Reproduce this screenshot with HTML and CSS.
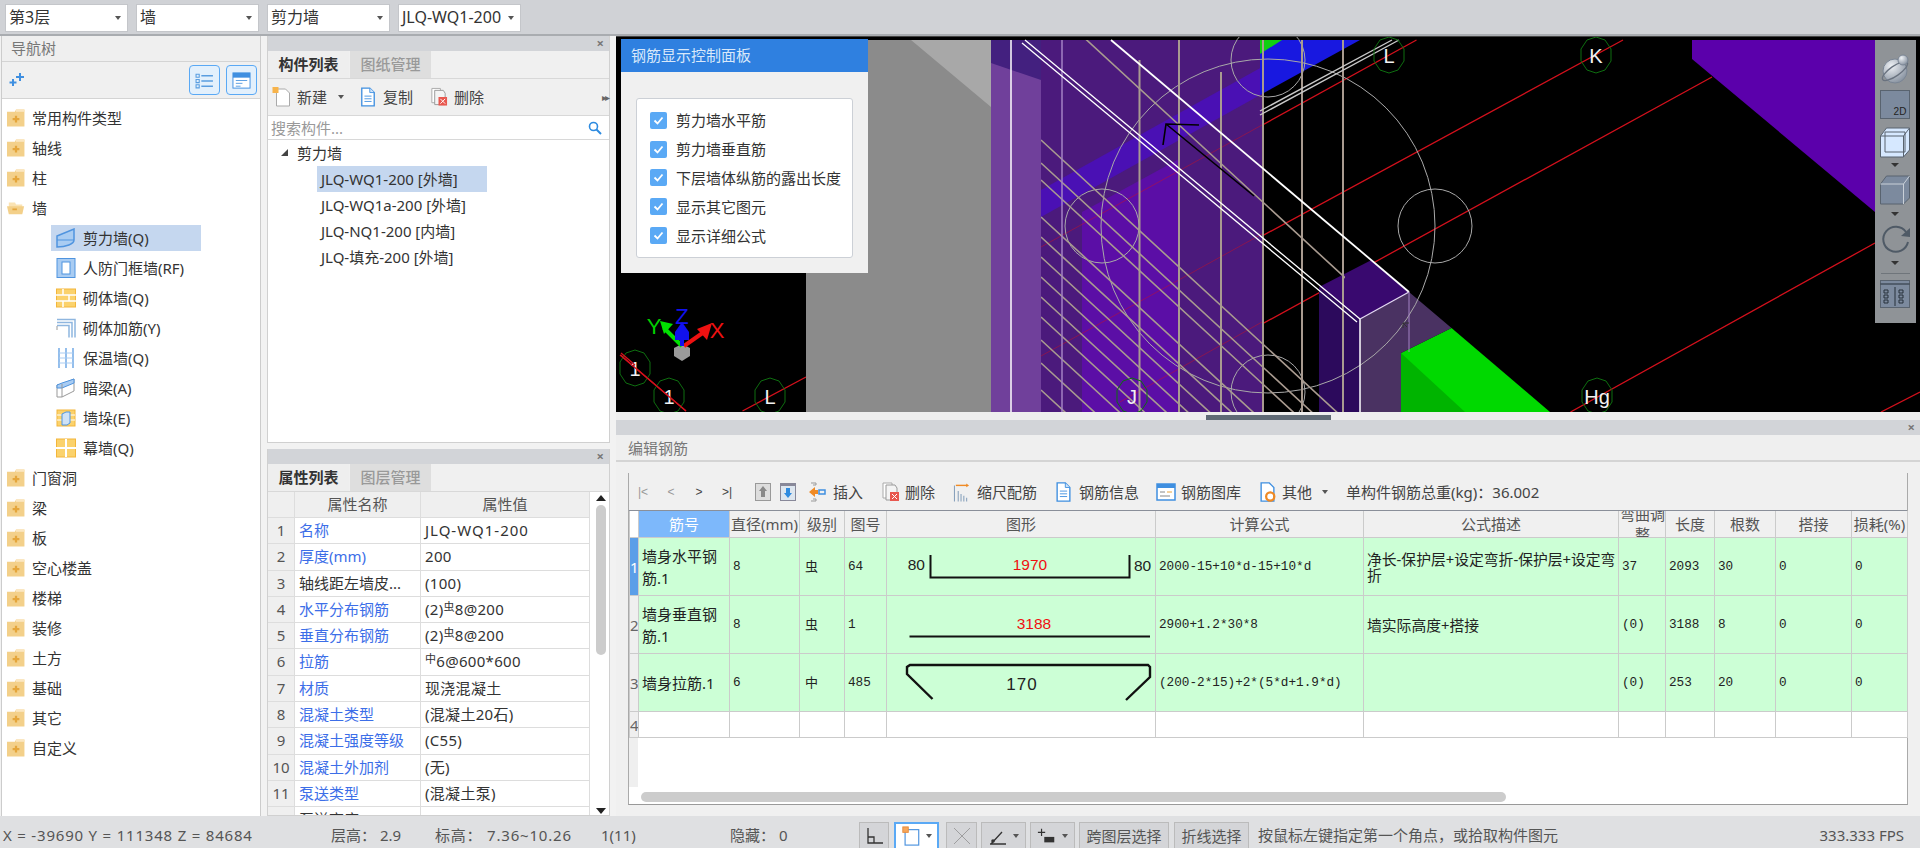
FILE: index.html
```html
<!DOCTYPE html>
<html lang="zh-CN">
<head>
<meta charset="utf-8">
<title>钢筋三维</title>
<link rel="stylesheet" href="styles.css">
</head>
<body>
<svg class="sprite" aria-hidden="true">
  <symbol id="fold" viewBox="1 1 16 16"><path d="M1 3.500h7l1-2h7.500v15H1z" fill="#f3d08a"/><path d="M9 1.500h7.500v2H9z" fill="#fbe7c0"/><path d="M9 7v6M6 10h6" stroke="#e5a63c" stroke-width="2"/></symbol>
  <symbol id="fold-open" viewBox="0 0 20 18"><path d="M2 3h7l1 2h7v3H2z" fill="#fae3b4"/><path d="M0 7h19l-2 9H2z" fill="#f3d08a"/><path d="M6 10.500h5" stroke="#e5a63c" stroke-width="2"/></symbol>
  <symbol id="doc-del" viewBox="0 0 20 20"><path d="M3 1h9v15H3z" fill="#fff" stroke="#aaa"/><path d="M6 3h9l2 3v12H6z" fill="#f4f4f4" stroke="#999"/><rect x="10" y="10" width="9" height="9" fill="#e8584f"/><path d="M12 12l5 5M17 12l-5 5" stroke="#fff"/></symbol>
  <symbol id="doc-blue" viewBox="0 0 18 22"><path d="M2 1h9l5 5v15H2z" fill="#fff" stroke="#3f8fe0" stroke-width="1.500"/><path d="M11 1v5h5" fill="#cfe4fa" stroke="#3f8fe0"/><path d="M5 10h8M5 13h8M5 16h8" stroke="#3f8fe0"/></symbol>
  <symbol id="win-blue" viewBox="0 0 20 18"><rect x="1" y="1" width="18" height="16" fill="#fff" stroke="#3f8fe0" stroke-width="1.500"/><path d="M1 1h18v4H1z" fill="#3f8fe0"/><path d="M4 9h5M4 13h10" stroke="#888"/><path d="M11 9h5" stroke="#e8a33c"/></symbol>
</svg>

<header class="topbar">
  <div class="combo"><span>第3层</span><i class="caret"></i></div>
  <div class="combo"><span>墙</span><i class="caret"></i></div>
  <div class="combo"><span>剪力墙</span><i class="caret"></i></div>
  <div class="combo"><span>JLQ-WQ1-200</span><i class="caret"></i></div>
</header>

<main class="main">
  <nav class="nav">
    <div class="nav-title">导航树</div>
    <div class="nav-tools">
      <svg class="spark" viewBox="0 0 16 14"><path d="M11 0v8M7 4h8M4 6v7M0.500 9.500h7" stroke="#3f8fe0" stroke-width="2"/></svg>
      <span class="nav-btn"><svg viewBox="0 0 18 18"><path d="M1 3h3v3H1zM1 8h3v3H1zM1 13h3v3H1z" fill="none" stroke="#5a9de0"/><path d="M6 4.500h11M6 9.500h11M6 14.500h11" stroke="#5a9de0" stroke-width="1.500"/></svg></span>
      <span class="nav-btn"><svg viewBox="0 0 20 18"><rect x="1" y="1" width="18" height="16" fill="#fff" stroke="#3f8fe0"/><path d="M1 1h18v5H1z" fill="#3f8fe0"/><path d="M4 9h12M4 12h7M4 15h5" stroke="#5a9de0"/></svg></span>
    </div>
    <ul class="tree">
      <li class="node"><svg class="ico-f"><use href="#fold"/></svg>常用构件类型</li>
      <li class="node"><svg class="ico-f"><use href="#fold"/></svg>轴线</li>
      <li class="node"><svg class="ico-f"><use href="#fold"/></svg>柱</li>
      <li class="node"><svg class="ico-f"><use href="#fold-open"/></svg>墙</li>
      <li class="node sub sel"><svg class="ico-w" viewBox="0 0 20 20"><path d="M1 8l17-7v11c0 4-8 7-17 7z" fill="#a9ccf2" stroke="#4f94df" stroke-width="1.500"/><path d="M1 12h17" stroke="#4f94df"/></svg>剪力墙(Q)</li>
      <li class="node sub"><svg class="ico-w" viewBox="0 0 20 20"><rect x="1" y="0.500" width="18" height="19" fill="#a9ccf2" stroke="#4f94df"/><rect x="6" y="4" width="8" height="12" fill="#fff" stroke="#4f94df"/></svg>人防门框墙(RF)</li>
      <li class="node sub"><svg class="ico-w" viewBox="0 0 20 20"><rect x="0.500" y="1" width="19" height="18" fill="#fbd26c" stroke="#f3b63a"/><path d="M0 7h20M0 13h20M7 1v6M13 7v6M7 13v6" stroke="#fff" stroke-width="1.500"/></svg>砌体墙(Q)</li>
      <li class="node sub"><svg class="ico-w" viewBox="0 0 20 20"><path d="M1 1.500h18v18M1 4.500h15v15M1 7.500h12v12" fill="none" stroke="#8fb6df" stroke-width="1.500"/><path d="M1 8v4" stroke="#999"/></svg>砌体加筋(Y)</li>
      <li class="node sub"><svg class="ico-w" viewBox="0 0 20 20"><path d="M3 0v20M10 0v20M17 0v20" stroke="#4f94df" stroke-width="1.200"/><path d="M3 5h14M3 10h14M3 15h14" stroke="#a9ccf2"/></svg>保温墙(Q)</li>
      <li class="node sub"><svg class="ico-w" viewBox="0 0 20 20"><path d="M1 7l5-1 12-5v12l-12 6H1z" fill="#fff" stroke="#999"/><path d="M1 7l5-2 12-4v4L6 10H1z" fill="#a9ccf2" stroke="#4f94df"/><path d="M6 6v13" stroke="#999"/></svg>暗梁(A)</li>
      <li class="node sub"><svg class="ico-w" viewBox="0 0 20 20"><rect x="1" y="2" width="18" height="16" fill="#fbd26c" stroke="#f3b63a"/><path d="M1 7h18M1 12h18" stroke="#fff"/><path d="M6 6l4-2h4v11l-3 2H6z" fill="#cfe2f6" stroke="#4f94df"/></svg>墙垛(E)</li>
      <li class="node sub"><svg class="ico-w" viewBox="0 0 20 20"><rect x="0.500" y="1" width="19" height="18" fill="#fbd26c" stroke="#f3b63a"/><path d="M10 1v18M0 10h20" stroke="#fff" stroke-width="2"/></svg>幕墙(Q)</li>
      <li class="node"><svg class="ico-f"><use href="#fold"/></svg>门窗洞</li>
      <li class="node"><svg class="ico-f"><use href="#fold"/></svg>梁</li>
      <li class="node"><svg class="ico-f"><use href="#fold"/></svg>板</li>
      <li class="node"><svg class="ico-f"><use href="#fold"/></svg>空心楼盖</li>
      <li class="node"><svg class="ico-f"><use href="#fold"/></svg>楼梯</li>
      <li class="node"><svg class="ico-f"><use href="#fold"/></svg>装修</li>
      <li class="node"><svg class="ico-f"><use href="#fold"/></svg>土方</li>
      <li class="node"><svg class="ico-f"><use href="#fold"/></svg>基础</li>
      <li class="node"><svg class="ico-f"><use href="#fold"/></svg>其它</li>
      <li class="node"><svg class="ico-f"><use href="#fold"/></svg>自定义</li>
    </ul>
  </nav>

  <section class="mid">
    <div class="dock dock-list">
      <div class="strip"><span class="close">×</span></div>
      <div class="tabs"><span class="tab on">构件列表</span><span class="tab">图纸管理</span></div>
      <div class="list-tools">
        <span class="tool"><svg class="t-ico" viewBox="0 0 18 20"><path d="M4 2h9l4 4v13H4z" fill="#fff" stroke="#aaa"/><path d="M0 0h6v6H0z" fill="#f7b34a"/></svg>新建<i class="caret dark"></i></span>
        <span class="tool t2"><svg class="t-ico narrow"><use href="#doc-blue"/></svg>复制</span>
        <span class="tool t3"><svg class="t-ico"><use href="#doc-del"/></svg>删除</span>
        <span class="more">▸▸</span>
      </div>
      <div class="search"><span>搜索构件...</span><svg viewBox="0 0 14 14"><circle cx="5.500" cy="5.500" r="4" fill="none" stroke="#2e8be0" stroke-width="1.600"/><path d="M8.500 8.500l4.500 4.500" stroke="#2e8be0" stroke-width="2"/></svg></div>
      <ul class="clist">
        <li class="group"><i class="tri"></i>剪力墙</li>
        <li class="item sel">JLQ-WQ1-200 [外墙]</li>
        <li class="item">JLQ-WQ1a-200 [外墙]</li>
        <li class="item">JLQ-NQ1-200 [内墙]</li>
        <li class="item">JLQ-填充-200 [外墙]</li>
      </ul>
    </div>
    <div class="dock dock-props">
      <div class="strip"><span class="close">×</span></div>
      <div class="tabs"><span class="tab on">属性列表</span><span class="tab">图层管理</span></div>
      <div class="props">
        <div class="ptable">
          <div class="ph"></div><div class="ph">属性名称</div><div class="ph">属性值</div>
          <div class="pn">1</div><div class="pk">名称</div><div class="pv wide">JLQ-WQ1-200</div>
          <div class="pn">2</div><div class="pk">厚度(mm)</div><div class="pv">200</div>
          <div class="pn">3</div><div class="pk plain">轴线距左墙皮...</div><div class="pv">(100)</div>
          <div class="pn">4</div><div class="pk">水平分布钢筋</div><div class="pv">(2)<span class="bar">虫</span>8@200</div>
          <div class="pn">5</div><div class="pk">垂直分布钢筋</div><div class="pv">(2)<span class="bar">虫</span>8@200</div>
          <div class="pn">6</div><div class="pk">拉筋</div><div class="pv"><span class="bar">中</span>6@600*600</div>
          <div class="pn">7</div><div class="pk">材质</div><div class="pv">现浇混凝土</div>
          <div class="pn">8</div><div class="pk">混凝土类型</div><div class="pv">(混凝土20石)</div>
          <div class="pn">9</div><div class="pk">混凝土强度等级</div><div class="pv">(C55)</div>
          <div class="pn">10</div><div class="pk">混凝土外加剂</div><div class="pv">(无)</div>
          <div class="pn">11</div><div class="pk">泵送类型</div><div class="pv">(混凝土泵)</div>
          <div class="pn">12</div><div class="pk plain">泵送高度(m)</div><div class="pv">(10.26)</div>
        </div>
        <div class="vscroll"><i class="up"></i><b></b><i class="down"></i></div>
      </div>
    </div>
  </section>

  <section class="work">
    <div class="viewport">
      <svg class="scene" viewBox="616 37 1304 375">
        <defs>
          <clipPath id="diag"><rect x="1041" y="40" width="304" height="372"/></clipPath>
          <radialGradient id="ball" cx=".35" cy=".3" r=".8"><stop offset="0" stop-color="#eef1f5"/><stop offset="1" stop-color="#7f8a99"/></radialGradient>
        </defs>
        <g fill="none" stroke="#d3101c" stroke-width="1.300">
          <path d="M1416.500 40L1041 247M1623 40L1041 356M1712 77L1120 402M1875 243L1570.500 412M1920 392L1881 412M806 377L742.500 411M620.500 355L686 411"/>
        </g>
        <path d="M806 40h185v372H806z" fill="#8b8b8b"/>
        <path d="M911 40h80v67z" fill="#a8a8a8"/>
        <path d="M991 40h50v372h-50z" fill="#70409b"/>
        <path d="M991 40h50v40l-50-17z" fill="#43207f"/>
        <path d="M1041 40h221v372H1041z" fill="#4b1a7c"/>
        <path d="M1082 212L1179 159V412H1082z" fill="#5b0ea6"/>
        <path d="M1041 190L1262 67v27L1041 217z" fill="#4a10b4"/>
        <path d="M1260 40h100l-100 55z" fill="#1818e0"/>
        <path d="M1260 40h22l-22 14z" fill="#10d010"/>
        <path d="M1692 40h183v172L1692 59z" fill="#5b00ab"/>
        <path d="M1401 353l50.500-25L1550 412H1401z" fill="#00d900"/>
        <path d="M1401 353l64 59h-64z" fill="#00b400"/>
        <path d="M1319 287l41 32v93h-41z" fill="#2c0a5c"/>
        <path d="M1319 287l52.500-27 37.500 32-49 27z" fill="#39096f"/>
        <path d="M1360 319l49-27 42.500 36-50.500 25v59h-41z" fill="#4a3262"/>
        <g fill="none" stroke="#d3101c" stroke-width="1" opacity=".45">
          <path d="M1262 125L1041 247M1262 234L1041 356M1262 322L1120 402"/>
        </g>
        <g fill="none" stroke="#a9a9a9" stroke-width="1">
          <circle cx="1268" cy="226" r="167"/>
          <circle cx="1102" cy="226" r="37"/>
          <circle cx="1435" cy="226" r="37"/>
          <circle cx="1268" cy="60" r="37"/>
          <circle cx="1268" cy="392" r="37"/>
        </g>
        <path clip-path="url(#diag)" fill="none" stroke="#a99b90" stroke-width="1.600" d="M1041 -2l400 368M1041 140l400 368M1041 163l400 368M1041 180l400 368M1041 217l400 368M1041 237l400 368M1041 257l400 368M1041 277l400 368M1041 297l400 368M1041 317l400 368M1041 340l400 368M1041 363l400 368M1041 390l400 368"/>
        <g fill="none" stroke="#a99b90" stroke-width="2">
          <path d="M1139.500 60V412M1179 40V412M1221 72V412M1263 40V412M1302 40V412M1343 40V412"/>
          <path d="M1062 40V412" stroke="#a382c4" stroke-width="1.500"/>
        </g>
        <g fill="none" stroke="#fff">
          <path d="M1011 40V412" stroke-width="1.500"/>
          <path d="M1025 40L1360 319M1022 43L1357 322" stroke-width="1.300"/>
          <path d="M1111 40L1409 292" stroke-width="1.800"/>
          <path d="M1360 319V412" stroke-width="1.500"/>
          <path d="M1360 319l49-27" stroke="#e4d8f4" stroke-width="1.300"/>
          <path d="M1409 292v60" stroke="#a382c4"/>
          <path d="M1260 115L1399 40M1260 111L1392 40" stroke="#c9c9c9" stroke-width="1.400"/>
        </g>
        <path d="M1199 125l-33-1-3 21M1166 124l88 72" fill="none" stroke="#000" stroke-width="1.600"/>
        <path d="M1403 323l4 4M1403 323v5M1403 323h6" stroke="#333" fill="none"/>
        <g fill="none" stroke="#0e6e10" stroke-width="1">
          <path d="M620 362l6-9 9-3 9 3 6 9v12l-6 9-9 3-9-3-6-9z"/>
          <path d="M654 390l6-9 9-3 9 3 6 9v12l-6 9-9 3-9-3-6-9z"/>
          <path d="M755 390l6-9 9-3 9 3 6 9v12l-6 9-9 3-9-3-6-9z"/>
          <path d="M1117 390l6-9 9-3 9 3 6 9v12l-6 9-9 3-9-3-6-9z"/>
          <path d="M1374 49l6-9 9-3 9 3 6 9v12l-6 9-9 3-9-3-6-9z"/>
          <path d="M1581 49l6-9 9-3 9 3 6 9v12l-6 9-9 3-9-3-6-9z"/>
          <path d="M1582 390l6-9 9-3 9 3 6 9v12l-6 9-9 3-9-3-6-9z"/>
        </g>
        <g class="bubble" text-anchor="middle">
          <text x="635" y="376">1</text><text x="669" y="404">1</text><text x="770" y="404">L</text><text x="1132" y="404">J</text>
          <text x="1389" y="63">L</text><text x="1596" y="63">K</text><text x="1597" y="404">Hg</text>
        </g>
        <path d="M635 365l-14-12M620 355l66 56" stroke="#d3101c" stroke-width="1.300"/>
        <path d="M682 344l8 4v8l-8 5-8-5v-8z" fill="#9a9a9a"/>
        <path d="M682 346l-18-18" stroke="#00e000" stroke-width="4"/>
        <path d="M660 321l13 3-9 10z" fill="#00e000"/>
        <path d="M684 346l20-14" stroke="#ee1111" stroke-width="4"/>
        <path d="M712 323l-5 17-10-11z" fill="#ee1111"/>
        <path d="M682 346v-20" stroke="#1111ee" stroke-width="4"/>
        <path d="M682 322l7 10v8h-14v-8z" fill="#1111ee"/>
        <g class="axis" text-anchor="middle"><text x="654" y="334" fill="#00d000">Y</text><text x="682" y="324" fill="#1111ee">Z</text><text x="717" y="338" fill="#ee1111">X</text></g>
      </svg>

      <div class="rebar-panel">
        <div class="rp-title">钢筋显示控制面板</div>
        <div class="rp-body">
          <div class="rp-box">
            <label class="chk"><svg viewBox="0 0 17 17"><rect width="17" height="17" rx="2" fill="#5aa9f5"/><path d="M4.500 8.500l3 3 5-6" fill="none" stroke="#fff" stroke-width="1.800"/></svg>剪力墙水平筋</label>
            <label class="chk"><svg viewBox="0 0 17 17"><rect width="17" height="17" rx="2" fill="#5aa9f5"/><path d="M4.500 8.500l3 3 5-6" fill="none" stroke="#fff" stroke-width="1.800"/></svg>剪力墙垂直筋</label>
            <label class="chk"><svg viewBox="0 0 17 17"><rect width="17" height="17" rx="2" fill="#5aa9f5"/><path d="M4.500 8.500l3 3 5-6" fill="none" stroke="#fff" stroke-width="1.800"/></svg>下层墙体纵筋的露出长度</label>
            <label class="chk"><svg viewBox="0 0 17 17"><rect width="17" height="17" rx="2" fill="#5aa9f5"/><path d="M4.500 8.500l3 3 5-6" fill="none" stroke="#fff" stroke-width="1.800"/></svg>显示其它图元</label>
            <label class="chk"><svg viewBox="0 0 17 17"><rect width="17" height="17" rx="2" fill="#5aa9f5"/><path d="M4.500 8.500l3 3 5-6" fill="none" stroke="#fff" stroke-width="1.800"/></svg>显示详细公式</label>
          </div>
        </div>
      </div>

      <svg class="view-tools" viewBox="0 0 41 283">
        <circle cx="20" cy="31" r="12" fill="url(#ball)" stroke="#7a8594"/><ellipse cx="20" cy="31" rx="15" ry="5" transform="rotate(-35 20 31)" fill="none" stroke="#69727f" stroke-width="1.300"/><circle cx="28" cy="20" r="5" fill="url(#ball)" stroke="#7a8594"/>
        <rect x="5.500" y="50.500" width="29" height="28" fill="#7c8a9e" stroke="#59636f"/><text class="t2d" x="25" y="75" text-anchor="middle">2D</text>
        <path d="M5.500 96l6-8h23v22l-6 7H5.500z" fill="#d6e8ff" stroke="#59636f"/><path d="M5.500 96h23v21M28.500 96l6-8M10 92h20v20H10z" fill="none" stroke="#59636f"/>
        <path d="M16 123h8l-4 4z" fill="#333"/>
        <path d="M5.500 144l6-8h23v22l-6 6H5.500z" fill="#7c8a9e" stroke="#59636f"/><path d="M5.500 144h23v20M28.500 144l6-8" fill="none" stroke="#c9d0d8"/>
        <path d="M16 172h8l-4 4z" fill="#333"/>
        <path d="M31 192a12.500 12.500 0 1 0 2 10" fill="none" stroke="#4f5a66" stroke-width="2"/><path d="M26 196l9-8v9z" fill="#4f5a66"/>
        <path d="M16 221h8l-4 4z" fill="#333"/>
        <path d="M6 233.500h29" stroke="#6f757b"/>
        <rect x="5.500" y="240.500" width="29" height="27" fill="#7c8a9e" stroke="#59636f"/><path d="M5.500 244h29M20 247v19M9 250h4v3H9zM9 255h4v3H9zM9 260h4v3H9zM24 250h4v3h-4zM24 255h4v3h-4zM24 260h4v3h-4z" fill="none" stroke="#26303a"/>
      </svg>
    </div>

    <div class="splitter"><span class="grip"></span></div>

    <div class="editor">
      <div class="strip"><span class="close">×</span></div>
      <div class="ed-title">编辑钢筋</div>
      <div class="frame">
        <div class="ed-tools">
          <span class="nav-ar a1">|&lt;</span><span class="nav-ar a2">&lt;</span><span class="nav-ar a3">&gt;</span><span class="nav-ar a4">&gt;|</span>
          <svg class="mv mv1" viewBox="0 0 16 18"><rect x="0.500" y="0.500" width="15" height="17" fill="#ddd" stroke="#999"/><path d="M8 3l4 5H10v6H6V8H4z" fill="#888"/></svg>
          <svg class="mv mv2" viewBox="0 0 16 18"><rect x="0.500" y="0.500" width="15" height="17" fill="#dde6ef" stroke="#889"/><rect x="1" y="1" width="14" height="2" fill="#889"/><path d="M8 15l-4-5h2V5h4v5h2z" fill="#2e8be0"/></svg>
          <span class="ed-btn b1"><svg viewBox="0 0 20 20"><path d="M1 10l6-5v3h3v4H7v3z" fill="#f08a24"/><path d="M3 1h5v2H5M3 19h5v-2H5" fill="none" stroke="#999"/><path d="M11 8h6v4h-6z" fill="none" stroke="#3f8fe0" stroke-width="1.500"/></svg>插入</span>
          <span class="ed-btn b2"><svg><use href="#doc-del"/></svg>删除</span>
          <span class="ed-btn b3"><svg viewBox="0 0 18 20"><path d="M1 3h1v17H1zM5 9h1v11H5zM8 12h1v8H8zM11 14h1v6h-1zM14 16h1v4h-1z" fill="#7b97b5"/><path d="M3 3h12" stroke="#f08a24" stroke-width="1.500"/><path d="M14 1l3 2-3 2z" fill="#f08a24"/></svg>缩尺配筋</span>
          <span class="ed-btn b4"><svg><use href="#doc-blue"/></svg>钢筋信息</span>
          <span class="ed-btn b5"><svg><use href="#win-blue"/></svg>钢筋图库</span>
          <span class="ed-btn b6"><svg viewBox="0 0 18 22"><path d="M2 1h9l5 5v15H2z" fill="#fff" stroke="#3f8fe0" stroke-width="1.500"/><circle cx="12" cy="16" r="4.500" fill="none" stroke="#f08a24" stroke-width="2.500"/></svg>其他<i class="caret dark"></i></span>
          <span class="ed-total">单构件钢筋总重(kg)：36.002</span>
        </div>
        <div class="grid-wrap">
          <table class="grid">
            <colgroup><col class="c0"><col class="c1"><col class="c2"><col class="c3"><col class="c4"><col class="c5"><col class="c6"><col class="c7"><col class="c8"><col class="c9"><col class="c10"><col class="c11"><col class="c12"></colgroup>
            <thead>
              <tr class="rh"><th class="corner"></th><th class="hot">筋号</th><th>直径(mm)</th><th>级别</th><th>图号</th><th>图形</th><th>计算公式</th><th>公式描述</th><th><div class="wrap-h">弯曲调整</div></th><th>长度</th><th>根数</th><th>搭接</th><th>损耗(%)</th></tr>
            </thead>
            <tbody>
              <tr class="r1 data">
                <td class="rn cur">1</td><td class="name">墙身水平钢筋.1</td><td class="m">8</td><td class="gr">虫</td><td class="m">64</td>
                <td class="shape"><svg viewBox="0 0 269 57"><path d="M43.500 17v22.500h199V17" fill="none" stroke="#111" stroke-width="2"/><text x="38" y="32" text-anchor="end">80</text><text class="red" x="143" y="32" text-anchor="middle">1970</text><text x="247" y="33">80</text></svg></td>
                <td class="m">2000-15+10*d-15+10*d</td><td class="desc">净长-保护层+设定弯折-保护层+设定弯折</td><td class="m">37</td><td class="m">2093</td><td class="m">30</td><td class="m">0</td><td class="m">0</td>
              </tr>
              <tr class="r2 data">
                <td class="rn">2</td><td class="name">墙身垂直钢筋.1</td><td class="m">8</td><td class="gr">虫</td><td class="m">1</td>
                <td class="shape"><svg viewBox="0 0 269 57"><path d="M22.500 40.500H263" stroke="#111" stroke-width="2"/><text class="red" x="147" y="33" text-anchor="middle">3188</text></svg></td>
                <td class="m">2900+1.2*30*8</td><td class="desc">墙实际高度+搭接</td><td class="m">(0)</td><td class="m">3188</td><td class="m">8</td><td class="m">0</td><td class="m">0</td>
              </tr>
              <tr class="r3 data">
                <td class="rn">3</td><td class="name">墙身拉筋.1</td><td class="m">6</td><td class="gr">中</td><td class="m">485</td>
                <td class="shape"><svg viewBox="0 0 269 57"><path d="M45.500 45L20 20v-7l3-2h238l2 2v10L239 46" fill="none" stroke="#111" stroke-width="2.400"/><text class="big" x="135" y="36" text-anchor="middle">170</text></svg></td>
                <td class="m">(200-2*15)+2*(5*d+1.9*d)</td><td class="desc"></td><td class="m">(0)</td><td class="m">253</td><td class="m">20</td><td class="m">0</td><td class="m">0</td>
              </tr>
              <tr class="r4">
                <td class="rn">4</td><td></td><td></td><td></td><td></td><td></td><td></td><td></td><td></td><td></td><td></td><td></td><td></td>
              </tr>
            </tbody>
          </table>
        </div>
        <div class="hscroll"><b></b></div>
      </div>
    </div>
  </section>
</main>

<footer class="status">
  <span class="s-xyz">X = -39690 Y = 111348 Z = 84684</span>
  <span class="s-floor">层高：&nbsp;2.9</span>
  <span class="s-elev">标高：&nbsp;7.36~10.26</span>
  <span class="s-count">1(11)</span>
  <span class="s-hide">隐藏：&nbsp;0</span>
  <span class="sb w30"><svg viewBox="0 0 20 20"><path d="M4 2v15h15M4 11h6v6" fill="none" stroke="#333" stroke-width="1.300"/></svg></span>
  <span class="sb w45 active"><svg viewBox="0 0 20 22"><rect x="3.500" y="4" width="15" height="17" fill="#fff" stroke="#4f94df" stroke-width="1.300"/><rect x="1" y="1" width="6" height="6" fill="#f7a65a" stroke="#e58a3a"/></svg><i class="caret dark"></i></span>
  <span class="sb w31 dim"><svg viewBox="0 0 20 20"><path d="M2 2l16 16M18 2L2 18" stroke="#999"/></svg></span>
  <span class="sb w45"><svg viewBox="0 0 20 20"><path d="M2 18h16M3 18L14 6" stroke="#333" stroke-width="1.300"/><circle cx="5" cy="15" r="1.800" fill="#333"/></svg><i class="caret dark"></i></span>
  <span class="sb w45"><svg viewBox="0 0 22 20"><path d="M1 6h8M5 2v8" stroke="#333" stroke-width="1.300"/><rect x="8" y="11" width="11" height="6" fill="#333"/></svg><i class="caret dark"></i></span>
  <span class="sb w90">跨图层选择</span>
  <span class="sb w75">折线选择</span>
  <span class="s-hint">按鼠标左键指定第一个角点，或拾取构件图元</span>
  <span class="s-fps">333.333 FPS</span>
</footer>
</body>
</html>
```

FILE: styles.css
```css
* { box-sizing: border-box; }
html, body { margin: 0; padding: 0; }
body {
  width: 1920px;
  height: 848px;
  overflow: hidden;
  display: flex;
  flex-direction: column;
  background: #f2f2f2;
  font: 15px/1.2 "Noto Sans", "Noto Sans CJK SC", sans-serif;
  color: #333;
}
ul { list-style: none; margin: 0; padding: 0; }
.sprite { position: absolute; width: 0; height: 0; }
.caret { display: inline-block; width: 0; height: 0; border: 3.500px solid transparent; border-top: 4px solid #555; border-bottom: 0; }
.caret.dark { border-top-color: #555; }

.topbar { height: 36px; flex: none; display: flex; gap: 8px; padding: 4px 0 0 5px; background: #d0d2d6; border-bottom: 2px solid #a9acb0; }
.combo { width: 123px; height: 28px; background: #fff; border: 1px solid #c4c6ca; display: flex; align-items: center; justify-content: space-between; padding: 0 6px 0 3px; color: #333; font-size: 16px; }

.main { flex: 1; display: flex; min-height: 0; }
.nav { width: 260px; margin-left: 1px; background: #fff; border-left: 1px solid #ccc; border-right: 1px solid #ccc; display: flex; flex-direction: column; }
.nav-title { height: 26px; background: #efefef; border-bottom: 1px solid #d4d4d4; padding-left: 9px; line-height: 25px; color: #777; }
.nav-tools { height: 37px; background: #f0f0f0; border-bottom: 1px solid #d4d4d4; display: flex; align-items: center; padding: 0 3px 0 7px; gap: 6px; }
.spark { width: 16px; height: 14px; margin-right: auto; }
.nav-btn { width: 31px; height: 30px; border: 1px solid #5aa9f5; border-radius: 4px; background: #e3f0fc; display: flex; align-items: center; justify-content: center; }
.nav-btn svg { width: 19px; height: 19px; }
.tree { padding-top: 4px; }
.node { height: 30px; display: flex; align-items: center; padding-left: 5px; color: #333; white-space: nowrap; }
.ico-f { width: 18px; height: 18px; margin-right: 7px; flex: none; }
.sub { padding-left: 54px; position: relative; }
.ico-w { width: 20px; height: 20px; margin-right: 7px; flex: none; }
.node.sel { width: 150px; margin-left: 49px; padding-left: 5px; height: 26px; margin-top: 2px; margin-bottom: 2px; background: #c5d7ef; }

.mid { width: 343px; margin-left: 6px; display: flex; flex-direction: column; gap: 6px; flex: none; }
.dock { background: #fff; border: 1px solid #d0d0d0; border-top: 0; display: flex; flex-direction: column; min-height: 0; }
.dock-list { height: 407px; }
.dock-props { flex: 1; overflow: hidden; }
.strip { height: 15px; flex: none; background: #d2d4d8; display: flex; justify-content: flex-end; align-items: center; padding-right: 5px; }
.close { color: #777; font-size: 13px; line-height: 15px; font-weight: 700; }
.tabs { height: 28px; flex: none; display: flex; background: #f0f0f0; border-bottom: 1px solid #d8d8d8; }
.tab { width: 81px; line-height: 27px; text-align: center; background: #dedede; color: #999; font-weight: 500; margin-right: 1px; }
.tab.on { background: #eee; color: #333; font-weight: 700; }
.list-tools { height: 37px; flex: none; background: #f0f0f0; border-bottom: 1px solid #d8d8d8; display: flex; align-items: center; position: relative; padding-left: 4px; }
.tool { display: flex; align-items: center; color: #444; }
.t-ico { width: 19px; height: 20px; margin-right: 6px; }
.t-ico.narrow { width: 16px; margin-right: 7px; }
.tool .caret { margin-left: 11px; }
.t2 { margin-left: 16px; }
.t3 { margin-left: 16px; }
.more { margin-left: auto; margin-right: 1px; font-size: 10px; color: #666; letter-spacing: -2px; }
.search { height: 24px; flex: none; display: flex; justify-content: space-between; align-items: center; padding: 0 7px 0 3px; color: #999; border-bottom: 1px solid #d8d8d8; }
.search svg { width: 14px; height: 14px; }
.group { height: 26px; display: flex; align-items: center; padding-left: 29px; position: relative; }
.tri { position: absolute; left: 13px; top: 9px; border-style: solid; border-width: 0 0 7px 7px; border-color: transparent transparent #444 transparent; }
.item { height: 26.100px; line-height: 26px; margin-left: 49px; padding-left: 4px; width: 170px; white-space: nowrap; color: #333; }
.item.sel { background: #c5d7ef; }

.props { flex: 1; display: flex; min-height: 0; overflow: hidden; }
.ptable { width: 322px; flex: none; display: grid; grid-template-columns: 27px 126px 169px; grid-template-rows: 26px repeat(12, 26.300px); background: #fff; }
.ptable > div { border-right: 1px solid #ddd; border-bottom: 1px solid #ddd; white-space: nowrap; overflow: hidden; line-height: 25px; }
.ph { background: #efefef; text-align: center; color: #555; }
.pn { background: #efefef; text-align: center; color: #555; }
.pk { padding-left: 4px; color: #3c6ee8; }
.pk.plain { color: #333; }
.pv { padding-left: 4px; color: #333; letter-spacing: .3px; }
.pv.wide { letter-spacing: 1px; }
.bar { font-size: 11px; position: relative; top: -4px; }
.vscroll { flex: 1; position: relative; background: #fff; }
.vscroll b { position: absolute; left: 6px; top: 13px; width: 10px; height: 150px; background: #ccc; border-radius: 5px; }
.up, .down { position: absolute; left: 6px; border: 5px solid transparent; }
.up { top: 0; border-bottom: 6px solid #222; border-top: 0; margin-top: 3px; }
.down { top: 316px; border-top: 6px solid #222; border-bottom: 0; }

.work { flex: 1; margin-left: 6px; min-width: 0; display: flex; flex-direction: column; }
.viewport { height: 376px; flex: none; position: relative; background: #000; border-top: 1px solid #444; }
.scene { display: block; width: 1304px; height: 375px; }
.bubble text { fill: #f2f2f2; font: 20px "Liberation Sans", sans-serif; }
.axis text { font: 22px "Liberation Sans", sans-serif; }
.rebar-panel { position: absolute; left: 5px; top: 2px; width: 247px; height: 234px; background: #f0f0f0; }
.rp-title { height: 33px; background: #2f80e0; color: #d8e8fa; padding-left: 10px; line-height: 33px; }
.rp-body { padding: 26px 15px 0 15px; }
.rp-box { height: 160px; width: 217px; background: #fff; border: 1px solid #ccd0d6; border-radius: 3px; padding: 7px 0 0 13px; display: flex; flex-direction: column; }
.chk { height: 28.800px; display: flex; align-items: center; color: #333; white-space: nowrap; }
.chk svg { width: 17px; height: 17px; margin-right: 9px; flex: none; }
.view-tools { position: absolute; left: 1259px; top: 3px; width: 41px; height: 283px; background: #8f9397; }
.t2d { font: 10px "Liberation Sans", sans-serif; fill: #222; }
.splitter { height: 8px; flex: none; background: #eee; display: flex; justify-content: center; }
.grip { width: 125px; height: 5px; margin-top: 3px; background: #5f6a75; }

.editor { flex: 1; background: #f0f0f0; display: flex; flex-direction: column; min-height: 0; }
.ed-title { height: 27px; flex: none; background: #efefef; border-bottom: 2px solid #d4d4d4; line-height: 26px; padding-left: 12px; color: #777; }
.frame { margin: 11px 12px 0 12px; height: 332px; background: #f0f0f0; border-left: 1px solid #aaa; border-right: 1px solid #aaa; border-bottom: 1px solid #999; display: flex; flex-direction: column; }
.ed-tools { height: 37px; flex: none; display: flex; align-items: center; position: relative; color: #444; white-space: nowrap; }
.nav-ar { width: 28px; font: 12px "Liberation Sans", sans-serif; color: #999; text-align: center; }
.a3, .a4 { color: #444; }
.mv { width: 16px; height: 18px; }
.mv1 { margin-left: 14px; }
.mv2 { margin-left: 9px; }
.ed-btn { display: flex; align-items: center; }
.ed-btn svg { width: 20px; height: 20px; margin-right: 5px; flex: none; }
.ed-btn .caret { margin-left: 10px; }
.b1 { margin-left: 12px; }
.b2 { margin-left: 17px; }
.b3 { margin-left: 18px; }
.b3 svg { width: 17px; margin-right: 7px; }
.b4 { margin-left: 18px; }
.b4 svg { width: 17px; margin-right: 7px; }
.b5 { margin-left: 17px; }
.b6 { margin-left: 18px; }
.b6 svg { width: 17px; margin-right: 6px; }
.ed-total { margin-left: 18px; }
.grid-wrap { height: 277px; flex: none; background: linear-gradient(to right, #efefef 9px, #fff 9px); border-top: 1px solid #8a8f99; }
.grid { table-layout: fixed; width: 1278px; border-collapse: collapse; }
.c0 { width: 9px; } .c1 { width: 91px; } .c2 { width: 70px; } .c3 { width: 45px; } .c4 { width: 42px; } .c5 { width: 269px; } .c6 { width: 208px; } .c7 { width: 255px; } .c8 { width: 47px; } .c9 { width: 49px; } .c10 { width: 61px; } .c11 { width: 76px; } .c12 { width: 56px; }
.grid th, .grid td { border: 1px solid #cbcbcb; padding: 0; overflow: hidden; white-space: nowrap; }
.grid th { background: #f0f0f0; font-weight: 400; color: #555; height: 26px; }
.grid tr.rh th { border-top: 0; }
.grid th.hot { background: #7db8fb; color: #fff; }
.grid th.corner { background: #fff; }
.wrap-h { width: 47px; height: 26px; display: flex; align-items: center; white-space: normal; line-height: 20px; text-align: center; overflow: hidden; }
.data td { background: #ccffd6; color: #222; }
.r1 td, .r3 td { height: 57px; }
.r2 td { height: 58px; }
.r4 td { height: 26px; background: #fff; }
.grid td.rn { background: #efefef; color: #666; text-align: center; font-size: 15px; }
.grid td.rn.cur { background: #5b9ee8; color: #fff; }
.grid td.name { white-space: normal; padding-left: 3px; line-height: 22px; }
.grid td.m { padding-left: 3px; font: 12.700px "Liberation Mono", "Noto Sans CJK SC", monospace; }
.grid td.gr { padding-left: 5px; font-size: 13px; }
.grid td.desc { white-space: normal; padding-left: 3px; line-height: 16px; font-size: 14.800px; }
.shape svg { display: block; width: 269px; height: 57px; }
.shape text { font: 15.500px "Liberation Sans", sans-serif; fill: #222; }
.shape text.red { fill: #f01010; }
.shape text.big { font-size: 17px; letter-spacing: 1px; }
.hscroll { flex: 1; background: #fff; padding: 5px 0 0 12px; }
.hscroll b { display: block; width: 865px; height: 10px; border-radius: 5px; background: #ccc; }

.status { height: 32px; flex: none; background: #dfe0e2; display: flex; align-items: flex-end; padding-left: 3px; color: #555; white-space: nowrap; }
.status > span { height: 26px; line-height: 26px; }
.s-xyz { width: 328px; letter-spacing: .8px; }
.s-floor { width: 104px; }
.s-elev { width: 166px; letter-spacing: .8px; }
.s-count { width: 129px; }
.s-hide { width: 129px; }
.sb { display: flex; align-items: center; justify-content: center; background: #d4d5d8; border: 1px solid #bbb; border-bottom: 0; margin-right: 4px; gap: 5px; }
.sb svg { width: 20px; height: 20px; }
.sb.active { background: #fff; border: 2px solid #5aa9f5; border-bottom: 0; margin-right: 7px; }
.sb.dim svg { opacity: .9; }
.w30 { width: 30px; margin-right: 5px; }
.w45 { width: 45px; }
.w31 { width: 31px; }
.w90 { width: 90px; margin-right: 5px; }
.w75 { width: 75px; margin-right: 9px; }
.s-fps { margin-left: auto; padding-right: 16px; }
```
